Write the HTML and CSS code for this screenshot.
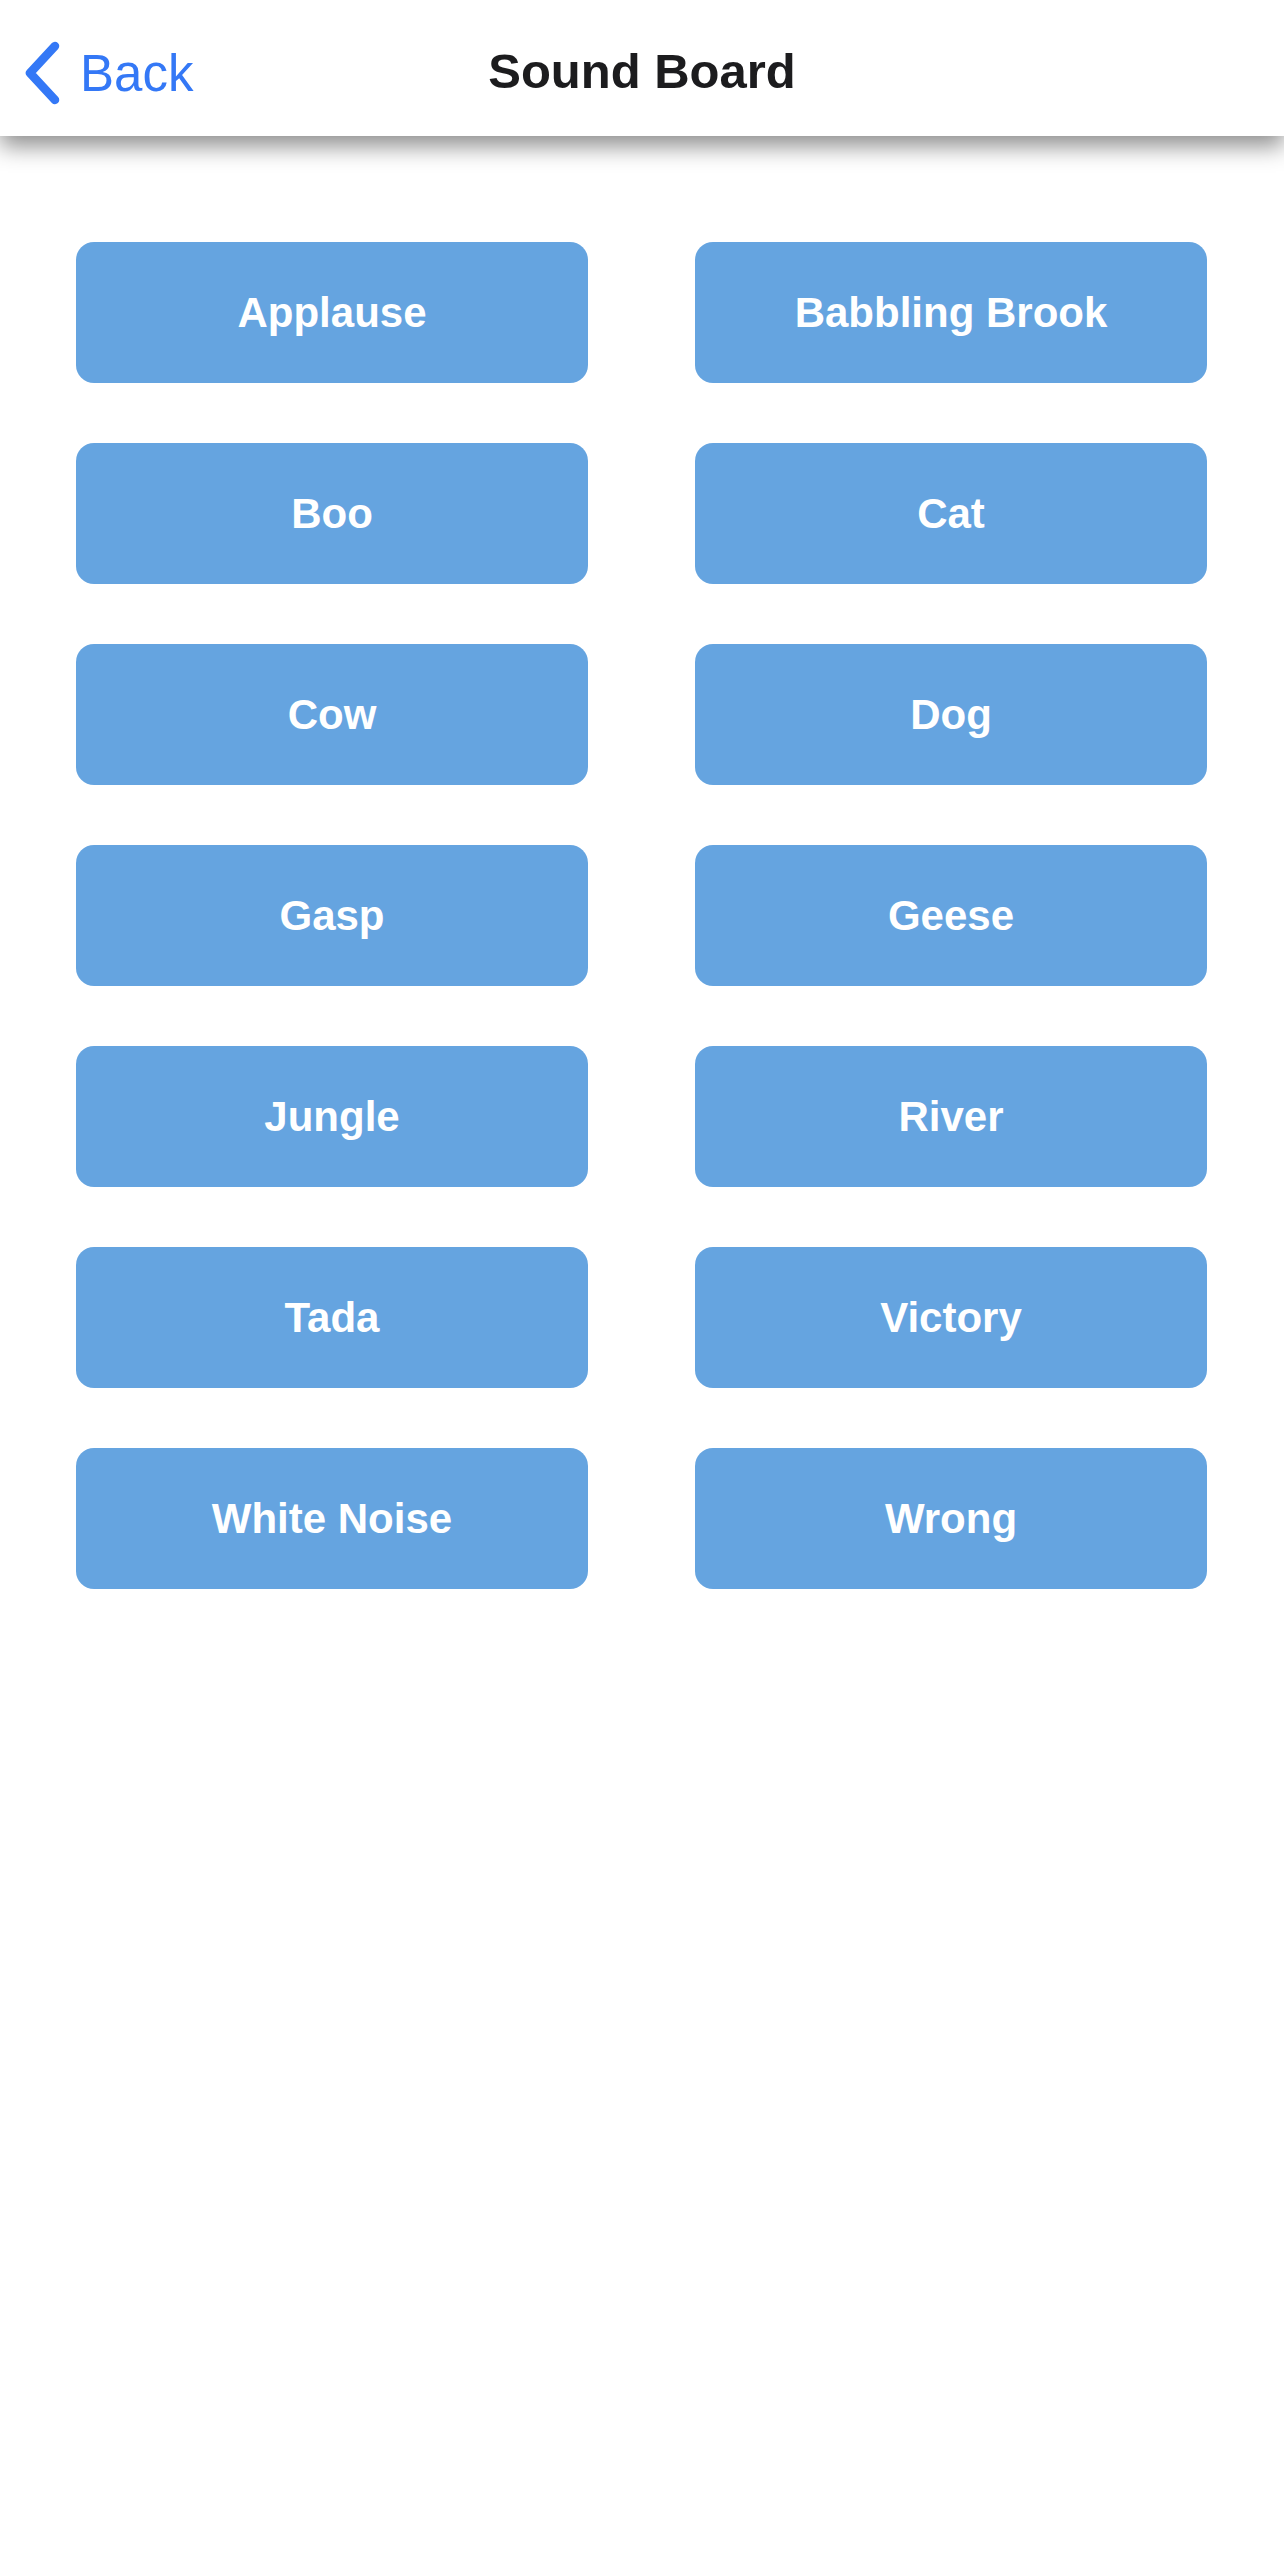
FILE: index.html
```html
<!DOCTYPE html>
<html>
<head>
<meta charset="utf-8">
<link rel="stylesheet" href="styles.css">
</head>
<body>
<header class="navbar">
  <div class="back">
    <svg class="chevron" width="40" height="64" viewBox="0 0 40 64"><path d="M33 5 L8 32 L33 59" fill="none" stroke="#3478f6" stroke-width="8.5" stroke-linecap="round" stroke-linejoin="round"/></svg>
    <span class="back-label">Back</span>
  </div>
  <div class="title">Sound Board</div>
</header>
<main class="board">
  <div class="btn">Applause</div>
  <div class="btn">Babbling Brook</div>
  <div class="btn">Boo</div>
  <div class="btn">Cat</div>
  <div class="btn">Cow</div>
  <div class="btn">Dog</div>
  <div class="btn">Gasp</div>
  <div class="btn">Geese</div>
  <div class="btn">Jungle</div>
  <div class="btn">River</div>
  <div class="btn">Tada</div>
  <div class="btn">Victory</div>
  <div class="btn">White Noise</div>
  <div class="btn">Wrong</div>
</main>
</body>
</html>
```
FILE: styles.css
```css
html, body {
  margin: 0;
  padding: 0;
  background: #ffffff;
  font-family: "Liberation Sans", Arial, sans-serif;
}
.navbar {
  position: relative;
  height: 136px;
  background: #ffffff;
  box-shadow: 0 10px 22px rgba(0, 0, 0, 0.45);
  display: flex;
  align-items: center;
  justify-content: center;
}
.back {
  position: absolute;
  left: 22px;
  top: 40px;
  display: flex;
  align-items: center;
  gap: 18px;
}
.chevron {
  display: block;
}
.back-label {
  color: #3478f6;
  font-size: 51px;
  line-height: 64px;
  margin-top: 2px;
}
.title {
  color: #1c1c1e;
  font-size: 49px;
  font-weight: 700;
  margin-top: 5px;
}
.board {
  display: grid;
  grid-template-columns: 512px 512px;
  column-gap: 107px;
  row-gap: 60px;
  padding: 106px 0 0 76px;
}
.btn {
  height: 141px;
  border-radius: 18px;
  background: #65a4e0;
  color: #ffffff;
  font-size: 42px;
  font-weight: 700;
  display: flex;
  align-items: center;
  justify-content: center;
}
```
